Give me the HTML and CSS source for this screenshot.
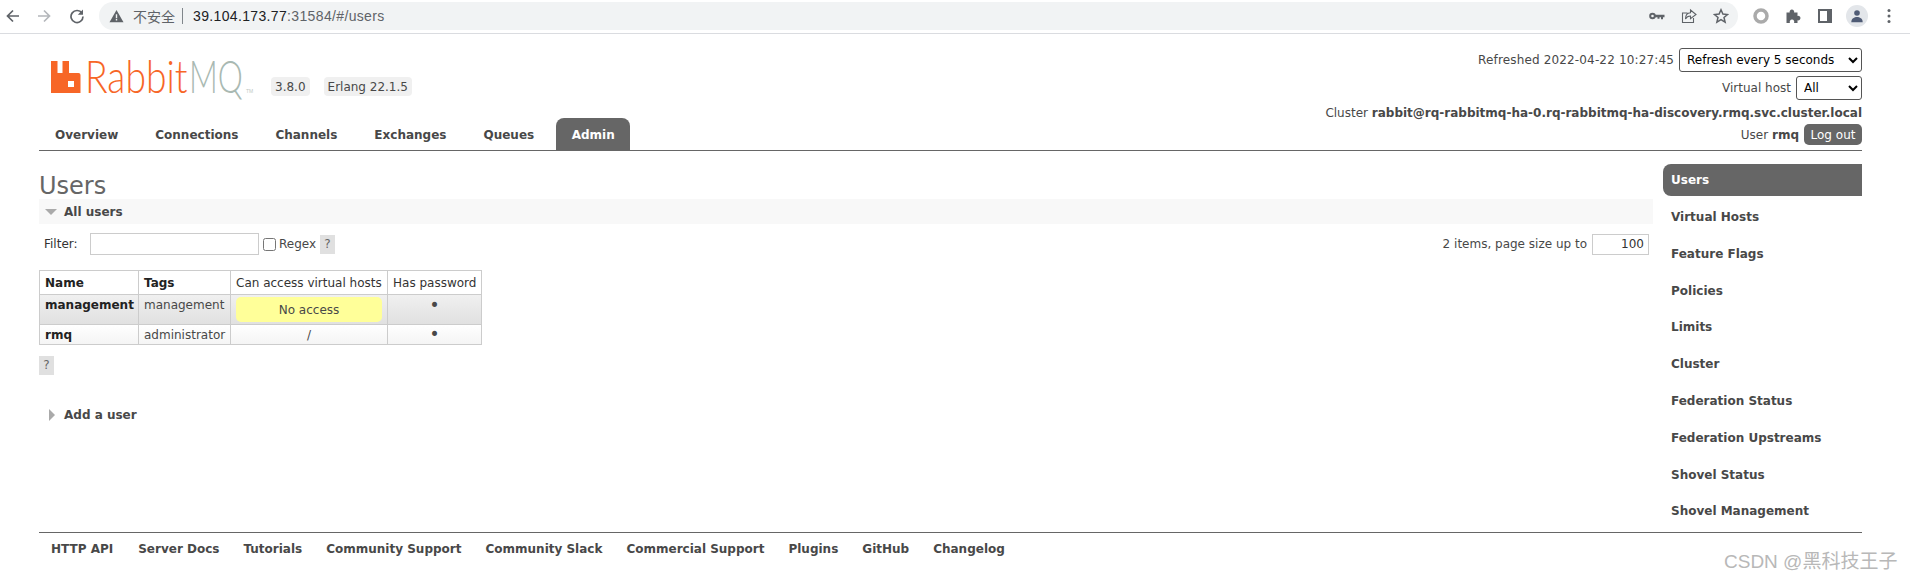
FILE: index.html
```html
<!DOCTYPE html>
<html lang="en">
<head>
<meta charset="utf-8">
<title>RabbitMQ Management</title>
<link rel="stylesheet" href="styles.css">
</head>
<body>
<div class="chrome">
  <svg class="cicon back" viewBox="0 0 16 16"><path d="M14 8H3M8 2.500 2.500 8 8 13.500" fill="none" stroke="#5f6368" stroke-width="1.700"/></svg>
  <svg class="cicon fwd" viewBox="0 0 16 16"><path d="M2 8h11M8 2.500 13.500 8 8 13.500" fill="none" stroke="#b4b7bb" stroke-width="1.700"/></svg>
  <svg class="cicon reload" viewBox="0 0 16 16"><path d="M13 5.200A6 6 0 1 0 14 8.500" fill="none" stroke="#5f6368" stroke-width="1.700"/><path d="M14 1.500v5.200H8.800z" fill="#5f6368"/></svg>
  <div class="omnibox">
    <svg class="warn" viewBox="0 0 16 16"><path d="M8 1 16 15H0z" fill="#5f6368"/><path d="M7.200 6h1.600v4.600H7.200zM7.200 11.500h1.600v1.600H7.200z" fill="#f1f3f4"/></svg>
    <span class="insecure">不安全</span>
    <span class="divider"></span>
    <span class="url">39.104.173.77<span class="url-dim">:31584/#/users</span></span>
    <span class="spacer"></span>
    <svg class="oicon" viewBox="0 0 16 16"><circle cx="3.500" cy="8" r="2.300" fill="none" stroke="#5f6368" stroke-width="2"/><path d="M6 6.800h9.500v2.400H14v2h-2v-2h-1.500v1.600H8.500V9.200H6z" fill="#5f6368"/></svg>
    <svg class="oicon" viewBox="0 0 16 16"><path d="M6.500 5H1.500v9.500h11V10M9.500 2 15 6.500 9.500 10.600V8C7 8 5.500 9 4.500 11c0-3.500 1.800-6 5-6.200z" fill="none" stroke="#5f6368" stroke-width="1.100"/></svg>
    <svg class="oicon" viewBox="0 0 16 16"><path d="m8 1.800 1.900 4.300 4.600.4-3.500 3 1.100 4.600L8 11.700l-4.100 2.400L5 9.500l-3.500-3 4.600-.4z" fill="none" stroke="#5f6368" stroke-width="1.500"/></svg>
  </div>
  <div class="exts">
    <svg class="ext" viewBox="0 0 16 16"><circle cx="8" cy="8" r="6" fill="none" stroke="#aaa" stroke-width="3.500"/></svg>
    <svg class="ext" viewBox="0 0 16 16"><path d="M1.500 4.500h3.200a2.300 2.300 0 1 1 4.400 0h3.400v3.400a2.300 2.300 0 1 1 0 4.400v2.700H9a2.300 2.300 0 1 0-4 0H1.500z" fill="#5f6368"/></svg>
    <svg class="ext" viewBox="0 0 16 16"><path d="M2 2h12v12H2z" fill="none" stroke="#5f6368" stroke-width="2"/><path d="M10 2h4v12h-4z" fill="#5f6368"/></svg>
    <span class="avatar"><svg viewBox="0 0 16 16"><circle cx="8" cy="4.500" r="3.200" fill="#4f5b75"/><path d="M1.500 15c0-4.200 3.500-5.800 6.500-5.800s6.500 1.600 6.500 5.800z" fill="#4f5b75"/></svg></span>
    <svg class="ext dots" viewBox="0 0 16 16"><circle cx="8" cy="2.500" r="1.500" fill="#5f6368"/><circle cx="8" cy="8" r="1.500" fill="#5f6368"/><circle cx="8" cy="13.500" r="1.500" fill="#5f6368"/></svg>
  </div>
</div>

<header class="header">
  <div class="brand">
    <div class="logo-row">
      <svg class="logo" width="203" height="36" viewBox="0 0 203 36">
        <path d="M0 1h6.500v12h5V1H18v12h9.500a2 2 0 0 1 2 2v18H0zM17 21v6h6v-6z" fill="#f76627" fill-rule="evenodd"/>
        <text class="logo-word" transform="translate(34 33) scale(.81 1)" fill="#f76627">Rabbit</text>
        <text class="logo-word" transform="translate(138 33) scale(.69 1)" fill="#a9b9b2">MQ</text>
        <text class="logo-tm" x="195" y="33" fill="#c0c8c4">TM</text>
      </svg>
      <span class="badge">3.8.0</span>
      <span class="badge">Erlang 22.1.5</span>
    </div>
    <nav class="tabs">
      <a class="tab">Overview</a>
      <a class="tab">Connections</a>
      <a class="tab">Channels</a>
      <a class="tab">Exchanges</a>
      <a class="tab">Queues</a>
      <a class="tab tab-active">Admin</a>
    </nav>
  </div>
  <div class="login">
    <div class="login-row row-refresh"><span class="refreshed">Refreshed 2022-04-22 10:27:45</span><select class="sel sel-refresh"><option>Refresh every 5 seconds</option></select></div>
    <div class="login-row row-vhost"><span>Virtual host</span><select class="sel sel-vhost"><option>All</option></select></div>
    <div class="login-row row-cluster"><span>Cluster <b>rabbit@rq-rabbitmq-ha-0.rq-rabbitmq-ha-discovery.rmq.svc.cluster.local</b></span></div>
    <div class="login-row row-user"><span>User <b>rmq</b></span><button class="logout">Log out</button></div>
  </div>
</header>

<div class="main">
  <div class="content">
    <h1 class="title">Users</h1>
    <div class="section-head"><span class="tri-down"></span><span>All users</span></div>
    <div class="filter">
      <label class="filter-label">Filter:</label>
      <input class="filter-input" type="text">
      <input class="regex-box" type="checkbox">
      <span class="regex">Regex</span>
      <span class="help">?</span>
      <span class="spacer"></span>
      <span class="items">2 items, page size up to</span>
      <input class="page-size" type="text" value="100">
    </div>
    <table class="users">
      <thead>
        <tr><th class="c-name strong">Name</th><th class="c-tags strong">Tags</th><th class="c-vh">Can access virtual hosts</th><th class="c-pw">Has password</th></tr>
      </thead>
      <tbody>
        <tr class="row-a"><td class="strong">management</td><td>management</td><td class="vh-cell"><div class="no-access">No access</div></td><td class="center bullet">•</td></tr>
        <tr class="row-b"><td class="strong">rmq</td><td>administrator</td><td class="center">/</td><td class="center bullet">•</td></tr>
      </tbody>
    </table>
    <div class="help-wrap"><span class="help">?</span></div>
    <div class="add-user"><span class="tri-right"></span><span>Add a user</span></div>
  </div>
  <aside class="side">
    <a class="side-item side-active">Users</a>
    <a class="side-item">Virtual Hosts</a>
    <a class="side-item">Feature Flags</a>
    <a class="side-item">Policies</a>
    <a class="side-item">Limits</a>
    <a class="side-item">Cluster</a>
    <a class="side-item">Federation Status</a>
    <a class="side-item">Federation Upstreams</a>
    <a class="side-item">Shovel Status</a>
    <a class="side-item">Shovel Management</a>
  </aside>
</div>

<footer class="footer">
  <a class="foot-first">HTTP API</a><a>Server Docs</a><a>Tutorials</a><a>Community Support</a><a>Community Slack</a><a>Commercial Support</a><a>Plugins</a><a>GitHub</a><a>Changelog</a>
</footer>
<div class="watermark">CSDN @黑科技王子</div>
</body>
</html>
```
FILE: styles.css
```css
* { box-sizing: border-box; }
html, body { margin: 0; height: 579px; overflow: hidden; background: #fff; }
body { font-family: "DejaVu Sans", Verdana, sans-serif; font-size: 12px; color: #484848; position: relative; }

.chrome { height: 34px; border-bottom: 1px solid #dadce0; display: flex; align-items: center; padding: 0 0 1px 5px; background: #fff; }
.cicon { width: 16px; height: 16px; flex: none; }
.back { margin-right: 15px; }
.fwd { margin-right: 17px; }
.reload { margin-right: 14px; }
.omnibox { width: 1639px; height: 28px; border-radius: 14px; background: #f1f3f4; display: flex; align-items: center; padding-left: 10px; font-family: "Liberation Sans", "Noto Sans CJK SC", sans-serif; font-size: 14px; color: #202124; flex: none; }
.warn { width: 15px; height: 14px; margin-right: 9px; }
.insecure { color: #5f6368; font-family: "Noto Sans CJK SC", sans-serif; font-size: 14px; }
.divider { width: 1px; height: 16px; background: #80868b; margin: 0 10px 0 7px; }
.url { letter-spacing: .35px; }
.url-dim { color: #5f6368; }
.spacer { flex: 1; }
.oicon { width: 16px; height: 16px; margin-right: 16px; }
.oicon:last-child { margin-right: 9px; }
.exts { display: flex; align-items: center; margin-left: 15px; }
.ext { width: 16px; height: 16px; margin-right: 16px; }
.avatar { width: 22px; height: 22px; border-radius: 50%; background: #e3e6ea; display: flex; align-items: center; justify-content: center; margin: 0 13px 0 -3px; }
.avatar svg { width: 14px; height: 14px; }

.header { display: flex; justify-content: space-between; margin: 0 48px 0 39px; border-bottom: 1px solid #666; height: 117px; }
.brand { padding-top: 26px; }
.logo-row { display: flex; align-items: flex-start; height: 58px; padding-left: 12px; }
.logo { flex: none; margin-right: 17px; overflow: visible; }
.logo-word { font-family: "Lato", "Liberation Sans", sans-serif; font-weight: 300; font-size: 46px; }
.logo-tm { font-family: "Liberation Sans", sans-serif; font-size: 5px; }
.badge { background: #f0f0f0; border-radius: 4px; padding: 0 4px; height: 19px; line-height: 20px; margin: 17px 14px 0 0; font-size: 12px; }
.tabs { display: flex; gap: 5px; }
.tab { height: 32px; line-height: 35px; padding: 0 16px; font-weight: bold; font-size: 12px; color: #484848; border-radius: 8px 8px 0 0; }
.tab-active { background: #666; color: #fff; margin-left: 1px; padding: 0 15.500px; }

.login { padding-top: 14px; display: flex; flex-direction: column; align-items: flex-end; }
.login-row { display: flex; align-items: center; gap: 5px; white-space: nowrap; }
.refreshed { letter-spacing: .15px; }
.row-refresh { height: 24px; }
.row-vhost { height: 24px; margin-top: 4px; }
.row-cluster { height: 16px; margin-top: 5px; }
.row-user { height: 21px; margin-top: 3px; }
.sel { height: 24px; background: #fff; border: 1px solid #555; border-radius: 3px; font-family: "DejaVu Sans", sans-serif; font-size: 12px; color: #000; padding: 0 0 0 3px; }
.sel-refresh { width: 183px; }
.sel-vhost { width: 66px; }
.logout { width: 58px; height: 21px; border: 0; border-radius: 5px; background: #666; color: #fff; font-family: "DejaVu Sans", sans-serif; font-size: 12px; padding: 0; }

.main { display: flex; gap: 10px; margin: 0 48px 0 39px; }
.content { flex: 1; min-width: 0; }
.title { margin: 22px 0 0; font-size: 24px; line-height: 26px; font-weight: normal; color: #666; }
.section-head { height: 25px; background: #f8f8f8; display: flex; align-items: center; gap: 7px; padding-left: 6px; font-weight: bold; }
.tri-down { width: 0; height: 0; border-left: 6px solid transparent; border-right: 6px solid transparent; border-top: 6px solid #aaa; }
.tri-right { width: 0; height: 0; border-top: 6px solid transparent; border-bottom: 6px solid transparent; border-left: 6px solid #aaa; }
.filter { display: flex; align-items: center; height: 24px; margin-top: 8px; padding-left: 5px; }
.filter-label { width: 46px; color: #333; }
.filter-input { width: 169px; height: 22px; border: 1px solid #ccc; background: #fff; padding: 0; }
.regex-box { width: 13px; height: 13px; margin: 0 3px 0 4px; }
.regex { width: 41px; }
.help { width: 15px; height: 19px; line-height: 19px; text-align: center; background: #e0e0e0; display: block; color: #666; }
.items { margin-right: 5px; }
.page-size { width: 57px; height: 21px; border: 1px solid #ccc; text-align: right; padding: 0 4px; font-family: "DejaVu Sans", sans-serif; font-size: 12px; color: #333; margin-right: 4px; }

.users { border-collapse: collapse; table-layout: fixed; width: 442px; margin-top: 14px; }
.users th, .users td { border: 1px solid #ccc; padding: 0 4px 0 5px; font-weight: normal; text-align: left; }
.users thead tr { height: 24px; }
.users .strong { font-weight: bold; color: #222; }
.c-name { width: 99px; }
.c-tags { width: 92px; }
.c-vh { width: 157px; }
.c-pw { width: 94px; }
.users th { color: #333; white-space: nowrap; }
.row-a { height: 30px; background: linear-gradient(#f0f0f0, #e0e0e0); }
.row-a td { vertical-align: top; padding-top: 3px; }
.row-b { height: 20px; background: linear-gradient(#fff, #f4f4f4); }
.users .center { text-align: center; padding-left: 4px; }
.users .bullet { font-size: 17px; line-height: 15px; color: #484848; }
.users td.vh-cell { padding: 2px 5px; }
.no-access { height: 25px; line-height: 26px; background: #ff9; border-radius: 5px; text-align: center; }
.help-wrap { margin-top: 11px; }
.add-user { display: flex; align-items: center; gap: 9px; margin-top: 33px; padding-left: 10px; font-weight: bold; height: 14px; }

.side { width: 199px; flex: none; padding-top: 13.300px; }
.side-item { display: block; height: 32px; line-height: 32px; margin-bottom: 4.800px; padding-left: 8px; font-weight: bold; color: #484848; }
.side-active { background: #666; color: #fff; border-radius: 8px 0 0 8px; }

.footer { margin: 0 48px 0 39px; border-top: 1px solid #666; display: flex; gap: 24px; padding: 8px 0 0 12px; font-weight: bold; line-height: 16px; }
.foot-first { margin-right: 1px; }
.watermark { position: absolute; left: 1724px; top: 546px; font-family: "Liberation Sans", "Noto Sans CJK SC", sans-serif; font-size: 19px; color: #b8b8b8; white-space: nowrap; }
```
